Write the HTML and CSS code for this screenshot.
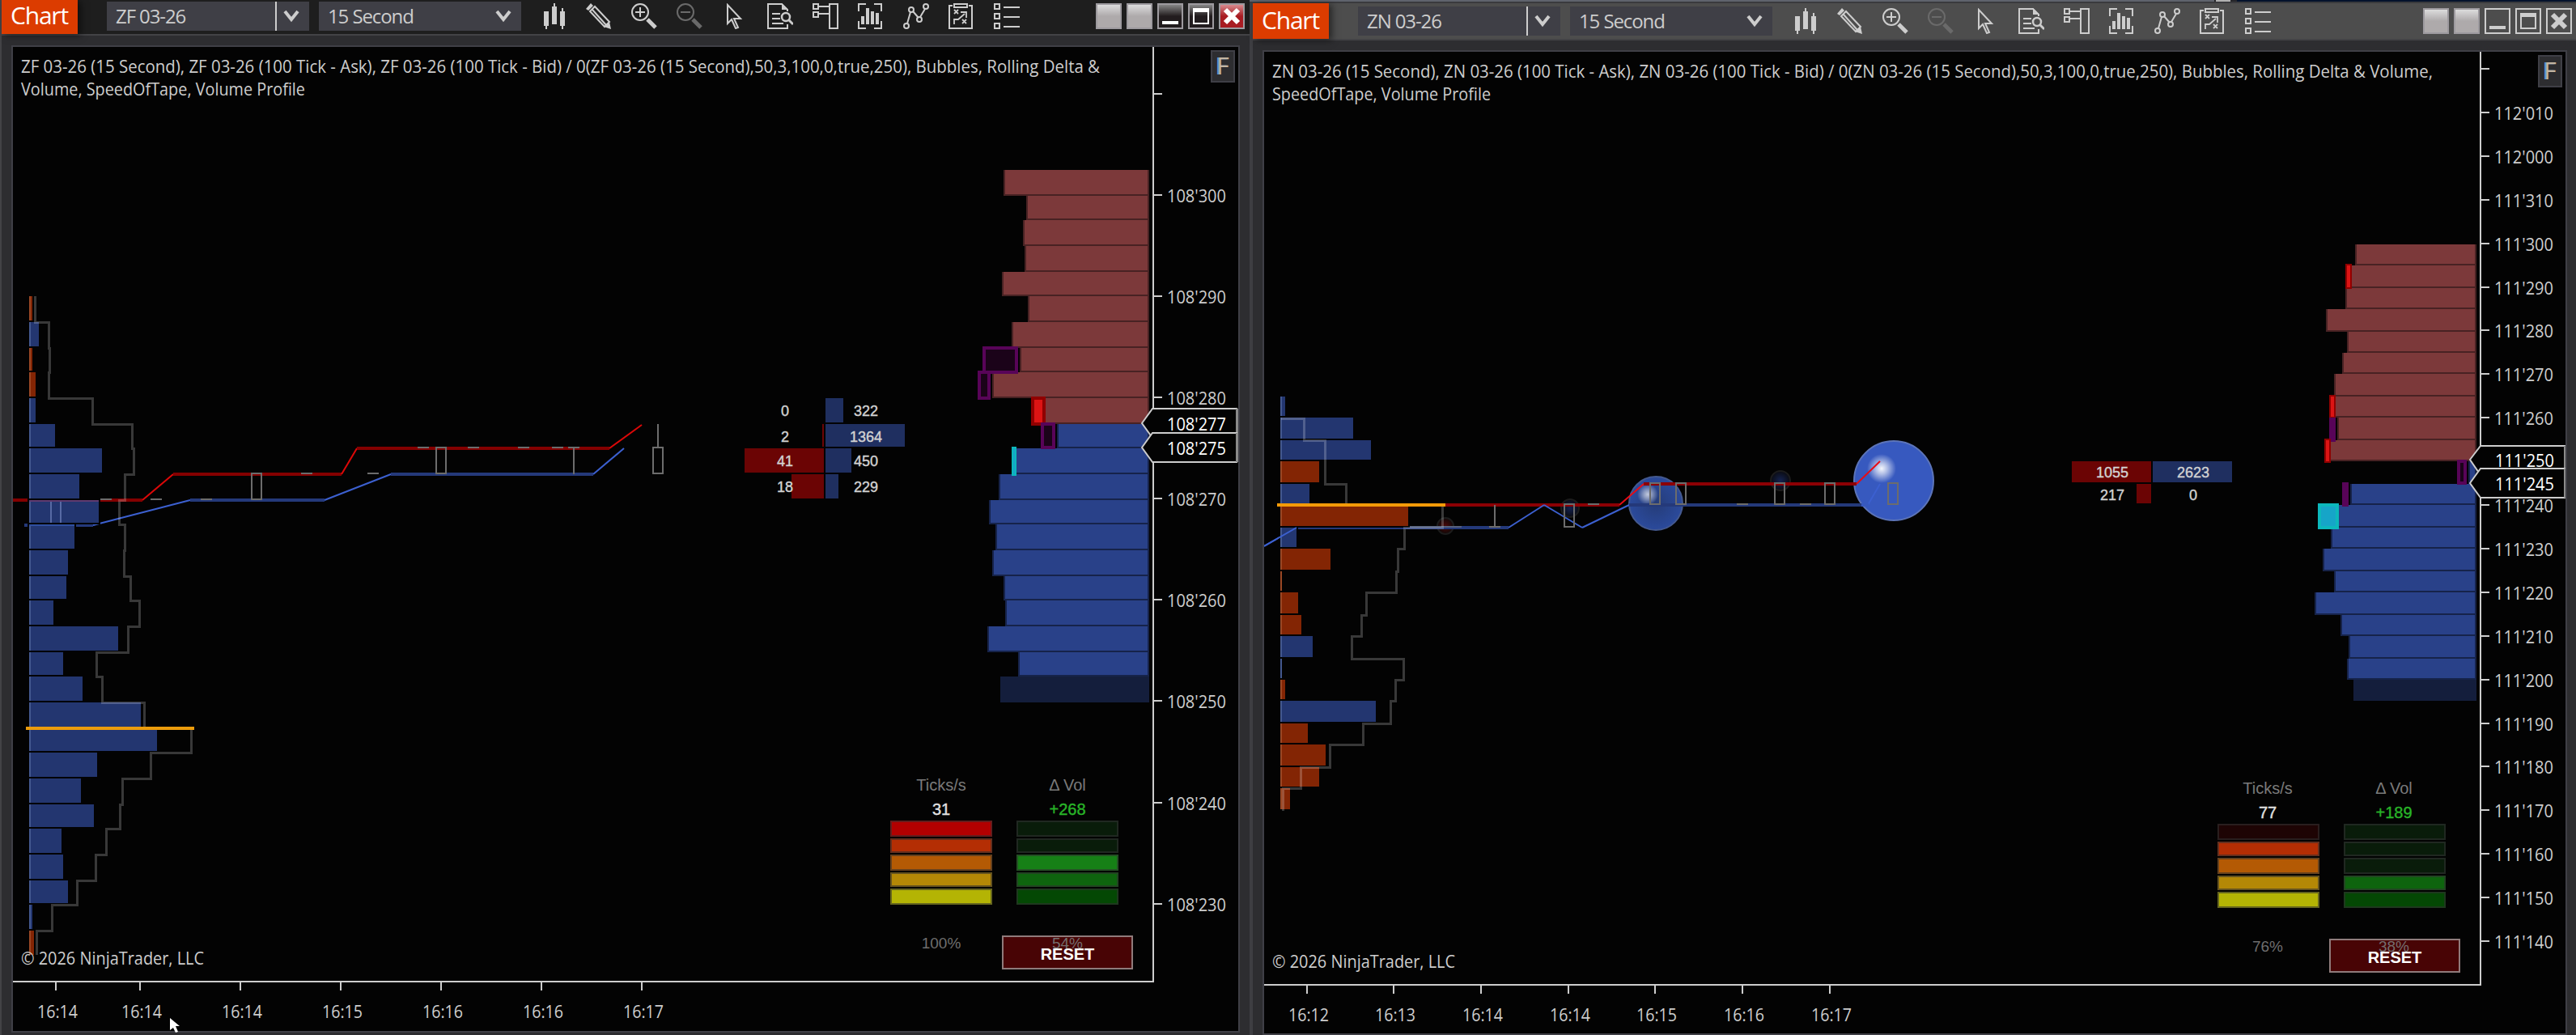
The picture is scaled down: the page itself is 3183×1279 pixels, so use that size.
FILE: index.html
```html
<!DOCTYPE html>
<html lang="en">
<head>
  <meta charset="UTF-8">
  <meta name="viewport" content="width=device-width, initial-scale=1.0">
  <title>Chart</title>
  <link rel="stylesheet" href="styles.css">
</head>
<body>
  <!-- icon sprite -->
  <svg class="sprite">
    <symbol id="i-candles" viewBox="0 0 32 32">
      <path d="M4 10h6v18h-6zM14 4h6v22h-6zM24 10h6v18h-6z" fill="currentColor"/>
      <path d="M7 28v4M17 0v4M27 6v4M27 28v4" stroke="currentColor" stroke-width="2"/>
    </symbol>
    <symbol id="i-pencil" viewBox="0 0 32 32">
      <path d="M0 7L6 0L9 3L3 9Z M31 32L22 29L29 23Z" fill="currentColor"/>
      <path d="M5 10L23 29L29 23L11 4Z M8 8L25 27" fill="none" stroke="currentColor" stroke-width="2"/>
    </symbol>
    <symbol id="i-zoomin" viewBox="0 0 32 32">
      <circle cx="11" cy="11" r="10" fill="none" stroke="currentColor" stroke-width="2"/>
      <path d="M11 5v12M5 11h12" stroke="currentColor" stroke-width="2"/>
      <path d="M20 20L30 30" stroke="currentColor" stroke-width="5"/>
    </symbol>
    <symbol id="i-zoomout" viewBox="0 0 32 32">
      <circle cx="11" cy="11" r="10" fill="none" stroke="currentColor" stroke-width="2"/>
      <path d="M5 11h12" stroke="currentColor" stroke-width="2"/>
      <path d="M20 20L30 30" stroke="currentColor" stroke-width="5"/>
    </symbol>
    <symbol id="i-cursor" viewBox="0 0 32 32">
      <path d="M7 2V25L12 20L17 31L20 30L15 19H23Z" fill="none" stroke="currentColor" stroke-width="2"/>
    </symbol>
    <symbol id="i-doc" viewBox="0 0 32 32">
      <path d="M25 10V8L18 1H1V31H25V26M6 13h10M6 19h10M6 25h14" fill="none" stroke="currentColor" stroke-width="2"/>
      <path d="M18 0L26 8H18Z" fill="currentColor"/>
      <circle cx="23" cy="17" r="5" fill="none" stroke="currentColor" stroke-width="2.5"/>
      <path d="M26 20L32 26" stroke="currentColor" stroke-width="3"/>
    </symbol>
    <symbol id="i-panel" viewBox="0 0 32 32">
      <path d="M1 1h6v6h-6zM1 11h6v6h-6zM21 1h10v30h-10zM7 4h14M7 13h14" fill="none" stroke="currentColor" stroke-width="2"/>
    </symbol>
    <symbol id="i-data" viewBox="0 0 32 32">
      <path d="M10 1H1V10M20 1H29V10M1 22V31H10M29 22V31H20" fill="none" stroke="currentColor" stroke-width="2"/>
      <path d="M4 16h4v10h-4zM10 6h4v20h-4zM16 10h4v16h-4zM22 12h4v14h-4z" fill="currentColor"/>
    </symbol>
    <symbol id="i-line" viewBox="0 0 32 32">
      <path d="M5 25L9 11M12 10L19 18M21 17L27 7" stroke="currentColor" stroke-width="2"/>
      <g fill="none" stroke="currentColor" stroke-width="2">
        <circle cx="4" cy="28" r="3"/><circle cx="10" cy="8" r="3"/><circle cx="20" cy="20" r="3"/><circle cx="28" cy="4" r="3"/>
      </g>
    </symbol>
    <symbol id="i-strategy" viewBox="0 0 32 32">
      <path d="M5 3H1V31H29V3H25M7 1H23V5H7Z" fill="none" stroke="currentColor" stroke-width="2"/>
      <path d="M7 26V20H12L20 13M15 11H22V18M7 8l5 5M12 8l-5 5M17 20l5 5M22 20l-5 5" fill="none" stroke="currentColor" stroke-width="1.8"/>
    </symbol>
    <symbol id="i-list" viewBox="0 0 32 32">
      <path d="M1 1h6v6h-6zM1 13h6v6h-6zM1 25h6v6h-6zM12 5h20M12 17h20M12 29h20" fill="none" stroke="currentColor" stroke-width="2"/>
    </symbol>
    <symbol id="i-chevron" viewBox="0 0 20 16">
      <path d="M2 2L10 12L18 2" fill="none" stroke="currentColor" stroke-width="4"/>
    </symbol>
    <symbol id="i-close" viewBox="0 0 28 28">
      <path d="M6 6L22 22M22 6L6 22" stroke="currentColor" stroke-width="6"/>
    </symbol>
    <symbol id="i-max" viewBox="0 0 28 28">
      <path d="M5 5h18v18h-18z" fill="none" stroke="currentColor" stroke-width="2"/>
      <path d="M4 4h20v5h-20z" fill="currentColor"/>
    </symbol>
    <symbol id="i-min" viewBox="0 0 28 28">
      <path d="M4 20h20v4h-20z" fill="currentColor"/>
    </symbol>
  </svg>

  <div class="window first">
    <div class="toolbar">
      <div class="tab">Chart</div>
      <div class="select instrument"><span>ZF 03-26</span><i></i><svg class="chevron"><use href="#i-chevron"/></svg></div>
      <div class="select interval"><span>15 Second</span><svg class="chevron"><use href="#i-chevron"/></svg></div>
      <div class="icons"></div>
      <div class="controls">
        <b></b><b></b>
        <b class="dark"><svg><use href="#i-min"/></svg></b>
        <b class="dark"><svg><use href="#i-max"/></svg></b>
        <b class="red"><svg><use href="#i-close"/></svg></b>
      </div>
    </div>
    <div class="content">
      <div class="panel">
        <svg class="chart" id="zf" width="1514" height="1216" viewBox="16 58 1514 1216"></svg>
        <div class="fix">F</div>
        <div class="tape">
          <div class="gauge">
            <p>Ticks/s</p><p class="value">31</p>
            <ul class="heat"><li></li><li></li><li></li><li></li><li></li></ul>
            <p class="percent">100%</p>
          </div>
          <div class="gauge">
            <p>Δ Vol</p><p class="value up">+268</p>
            <ul class="green"><li class="off"></li><li class="off"></li><li></li><li></li><li></li></ul>
            <p class="percent">54%</p>
          </div>
          <div class="reset">RESET</div>
        </div>
      </div>
    </div>
    <svg class="pointer" width="14" height="20" viewBox="0 0 14 20"><path d="M1 1V16L5 13L8 19L11 18L8 11H13Z" fill="#fff"/></svg>
  </div>

  <div class="window second">
    <div class="toolbar">
      <div class="tab">Chart</div>
      <div class="select instrument"><span>ZN 03-26</span><i></i><svg class="chevron"><use href="#i-chevron"/></svg></div>
      <div class="select interval"><span>15 Second</span><svg class="chevron"><use href="#i-chevron"/></svg></div>
      <div class="icons"></div>
      <div class="controls">
        <b></b><b></b>
        <b class="flat"><svg><use href="#i-min"/></svg></b>
        <b class="flat"><svg><use href="#i-max"/></svg></b>
        <b class="flat"><svg><use href="#i-close"/></svg></b>
      </div>
    </div>
    <div class="content">
      <div class="panel">
        <svg class="chart" id="zn" width="1608" height="1214" viewBox="1562 64 1608 1214"></svg>
        <div class="fix">F</div>
        <div class="tape">
          <div class="gauge">
            <p>Ticks/s</p><p class="value">77</p>
            <ul class="heat"><li class="off"></li><li></li><li></li><li></li><li></li></ul>
            <p class="percent">76%</p>
          </div>
          <div class="gauge">
            <p>Δ Vol</p><p class="value up">+189</p>
            <ul class="green"><li class="off"></li><li class="off"></li><li class="off"></li><li></li><li></li></ul>
            <p class="percent">38%</p>
          </div>
          <div class="reset">RESET</div>
        </div>
      </div>
    </div>
  </div>
  <script src="chart.js"></script>
</body>
</html>
```
FILE: styles.css
```css
* {
  margin: 0;
  padding: 0;
  box-sizing: border-box;
  list-style-type: none;
}
body {
  display: flex;
  width: 3183px;
  height: 1279px;
  overflow: hidden;
  background: #2d2d30;
  font-family: "Open Sans", "Noto Sans", sans-serif;
  color: #cdcdcd;
}
.sprite {
  position: absolute;
  width: 0;
  height: 0;
}
.window {
  position: relative;
  display: flex;
  flex-direction: column;
  height: 1279px;
}
.first {
  width: 1544px;
  border-left: 2px solid #434346;
}
.second {
  width: 1639px;
  border-left: 4px solid #3e3e42;
}
.second::before {
  content: "";
  flex: none;
  height: 2px;
  margin-left: -4px;
  border-bottom: 2px solid #3a3a3d;
  background: linear-gradient(90deg, #5f636d 1192px, #26262a 1192px, #26262a 1194px, #b0b0b0 1194px, #b0b0b0 1212px, #26262a 1212px, #26262a 1220px, #04122c 1220px);
}

/* toolbar */
.toolbar {
  display: flex;
  flex: none;
  align-items: center;
  height: 44px;
  padding-bottom: 2px;
  border-bottom: 2px solid #434346;
  background: #1e1e1e;
}
.second .toolbar {
  height: 46px;
  padding-bottom: 0;
  background: #4d4d4d;
}
.tab {
  align-self: flex-start;
  width: 94px;
  height: 42px;
  padding-left: 11px;
  background: #dc3c00;
  box-shadow: 4px 2px 8px rgba(0, 0, 0, .5);
  color: #fff;
  font-size: 30px;
  line-height: 37px;
  letter-spacing: -1.2px;
}
.second .tab {
  height: 44px;
  line-height: 41px;
}
.select {
  display: flex;
  align-items: center;
  width: 250px;
  height: 36px;
  padding: 0 12px 0 11px;
  background: #3f3f46;
  font-size: 24px;
  line-height: 36px;
  letter-spacing: -1.1px;
}
.select span {
  flex: 1;
  white-space: nowrap;
}
.instrument {
  margin-left: 36px;
}
.interval {
  margin-left: 12px;
}
.select i {
  width: 2px;
  height: 36px;
  margin-right: 8px;
  background: #cdcdcd;
}
.chevron {
  width: 20px;
  height: 16px;
}
.icons {
  display: flex;
  gap: 24px;
  margin-left: 24px;
}
.icons svg {
  width: 32px;
  height: 32px;
}
.icons .disabled {
  color: #6a6a6a;
}
.controls {
  display: flex;
  gap: 6px;
  margin-left: auto;
  margin-right: 6px;
}
.second .controls {
  margin-right: 5px;
}
.controls b {
  width: 32px;
  height: 32px;
  border: 2px solid #9d9a9f;
  background: linear-gradient(#dcdcdc, #aeaaab 50%);
}
.controls svg {
  display: block;
  width: 28px;
  height: 28px;
  color: #fff;
}
.controls .dark {
  background: linear-gradient(#858585, #221c1e 50%);
}
.controls .red {
  background: linear-gradient(#d88a8e, #a81c22 50%);
}
.controls .flat {
  border-color: #cdcdcd;
  background: none;
}
.controls .flat svg {
  color: #cdcdcd;
}

/* chart panel */
.content {
  flex: 1;
  min-height: 0;
  padding: 12px 12px 3px;
}
.second .content {
  padding: 12px 11px 0 12px;
}
.panel {
  position: relative;
  height: 100%;
  overflow: hidden;
  border: 2px solid #3f3f46;
  background: #030303;
}
.chart {
  display: block;
}
.chart text {
  fill: #cdcdcd;
  font-size: 22px;
}
.chart .print {
  fill: #d2d2d2;
  font: 18px "Liberation Sans", sans-serif;
  stroke: #d2d2d2;
  stroke-width: .4px;
}
.chart .last {
  fill: #fff;
}
.fix {
  position: absolute;
  top: 4px;
  right: 4px;
  width: 30px;
  height: 40px;
  border: 2px solid #3f3f46;
  background: #2d2d30;
  color: #c4b5a2;
  text-shadow: -2px 0 #5f97d4;
  font-size: 30px;
  line-height: 34px;
  text-align: center;
}
.tape {
  position: absolute;
  top: 897px;
  right: 148px;
  display: flex;
  gap: 30px;
  font: 20px/30px "Liberation Sans", sans-serif;
  text-align: center;
}
.second .tape {
  top: 895px;
}
.gauge {
  width: 126px;
  color: #7a7a7a;
}
.second .gauge p {
  margin-left: -2px;
}
.gauge .value {
  color: #e0e0e0;
  -webkit-text-stroke: .4px currentColor;
}
.gauge .up {
  color: #28b428;
}
.gauge .percent {
  position: relative;
  z-index: 2;
  margin-top: 33px;
  font-size: 19px;
  opacity: .9;
}
.gauge ul {
  display: grid;
  grid-template-rows: 20px 18px 20px 18px 20px;
  gap: 2px;
  margin-top: -1px;
}
.gauge li {
  border: 2px solid rgba(48, 48, 48, .6);
}
.heat li:nth-child(1) { background: #b20000; }
.heat li:nth-child(2) { background: #b42e04; }
.heat li:nth-child(3) { background: #b45a04; }
.heat li:nth-child(4) { background: #b48806; }
.heat li:nth-child(5) { background: #b4b404; }
.heat .off:nth-child(1) { background: #1e0404; }
.green li:nth-child(3) { background: #168016; }
.green li:nth-child(4) { background: #0e640e; }
.green li:nth-child(5) { background: #044804; }
.green .off:nth-child(n) { background: #091c0a; }
.reset {
  position: absolute;
  top: 201px;
  right: -18px;
  width: 162px;
  height: 42px;
  border: 2px solid #8f7b7b;
  background: #480405;
  color: #fff;
  font-weight: bold;
  line-height: 43px;
}
.pointer {
  position: absolute;
  left: 207px;
  top: 1257px;
}
```
FILE: chart.js
```js
var icons = ['candles', 'pencil', 'zoomin', 'zoomout', 'cursor', 'doc', 'panel', 'data', 'line', 'strategy', 'list'];
document.querySelectorAll('.icons').forEach(function (el) {
  el.innerHTML = icons.map(function (n) {
    return '<svg class="' + (n === 'zoomout' ? 'disabled' : '') + '"><use href="#i-' + n + '"/></svg>';
  }).join('');
});

var BLUE = '#233670', ORANGE = '#832504', GRAY = '#6c6c6c';

function rect(x1, y1, x2, y2, fill, extra) {
  return '<rect x="' + x1 + '" y="' + y1 + '" width="' + (x2 - x1) + '" height="' + (y2 - y1) + '" fill="' + fill + '" ' + (extra || '') + '/>';
}
function text(x, y, str, cls, width, anchor) {
  return '<text x="' + x + '" y="' + y + '" class="' + cls + '"' +
    (width ? ' textLength="' + width + '" lengthAdjust="spacingAndGlyphs"' : '') +
    (anchor ? ' text-anchor="' + anchor + '"' : '') + '>' + str + '</text>';
}
// flat parts are thick and dim, sloped parts thin and bright
function quote(pts, dim, bright) {
  var s = '';
  for (var i = 1; i < pts.length; i++) {
    var a = pts[i - 1], b = pts[i], flat = a[1] === b[1];
    s += '<line x1="' + a[0] + '" y1="' + a[1] + '" x2="' + b[0] + '" y2="' + b[1] + '" stroke="' + (flat ? dim : bright) + '" stroke-width="' + (flat ? 4 : 2) + '"/>';
  }
  return s;
}
function candle(x, y1, y2) {
  return '<rect x="' + (x + 1) + '" y="' + (y1 + 1) + '" width="12" height="' + (y2 - y1 - 2) + '" fill="none" stroke="' + GRAY + '" stroke-width="2"/>';
}
function dash(x, y) {
  return rect(x, y, x + 14, y + 2, GRAY);
}
// left hand volume profile: [top, right, o = orange]
function profile(x, rows, end) {
  return rows.map(function (r, i) {
    var bottom = (i + 1 < rows.length ? rows[i + 1][0] : end) - 2;
    return rect(x - 2, r[0] - 2, r[1] + 2, bottom + 2, '#030303') +
      rect(x, r[0], r[1], bottom, r[2] ? ORANGE : BLUE) +
      rect(x, r[0], x + 2, bottom, r[2] ? '#9a4724' : '#43588f');
  }).join('');
}
// outline steps: [x, y] means run down at x until y
function outline(x, y, steps) {
  var d = 'M' + x + ' ' + y;
  steps.forEach(function (s) { d += 'H' + s[0] + 'V' + s[1]; });
  return '<path d="' + d + '" fill="none" stroke="#fff" stroke-opacity=".21" stroke-width="3" shape-rendering="crispEdges"/>';
}
function depth(right, rows, end, split) {
  return rows.map(function (r, i) {
    var last = i === rows.length - 1;
    var bottom = last ? end : rows[i + 1][0];
    var c = last ? ['#141e3c', '#141e3c'] : i < split ? ['#7c393a', '#482223'] : ['#294189', '#16234a'];
    return rect(r[1], r[0], right, bottom, c[1]) + rect(r[1] + 2, r[0], right - 2, bottom - 2, c[0]);
  }).join('');
}
var marks = {
  p: ['#1b0319', '#580458'],
  r: ['#dc1414', '#900000'],
  c: ['#16a5c8', '#0cb8bc']
};
function mark(t, x1, y1, x2, y2) {
  var w = x2 - x1 < 10 ? 2 : 4;
  if (t === 'p' && w === 2) w = 4;
  return rect(x1 + w / 2, y1 + w / 2, x2 - w / 2, y2 - w / 2, marks[t][0], 'stroke="' + marks[t][1] + '" stroke-width="' + w + '"');
}
function priceTag(x, y, top, bottom, label) {
  return '<path d="M' + x + ' ' + y + 'L' + (x + 13) + ' ' + top + 'H' + (x + 117) + 'V' + bottom + 'H' + (x + 13) + 'Z" fill="#030303" stroke="#cdcdcd" stroke-width="2"/>' +
    rect(x + 116, top, x + 119, bottom, '#8a8a8a') +
    text(x + 31, y + 9, label, 'last', 73);
}
function axes(c) {
  var s = rect(c.ax, c.top, c.ax + 2, c.ay + 2, '#cdcdcd') + rect(c.left, c.ay, c.ax + 2, c.ay + 2, '#cdcdcd');
  c.prices.forEach(function (p, i) {
    var y = Math.round(c.p0 + i * c.pstep);
    s += rect(c.ax + 2, y - 1, c.ax + 12, y + 1, '#cdcdcd');
    if (p) s += text(c.ax + 18, y + 9, p, '', 73);
  });
  c.times.forEach(function (t) {
    s += rect(t[0] - 1, c.ay + 2, t[0] + 1, c.ay + 12, '#cdcdcd') + text(t[0] + 2, c.ay + 46, t[1], '', 50, 'middle');
  });
  return s;
}

/* ---- ZF ---- */
var s = axes({
  ax: 1424, ay: 1212, top: 58, left: 16, p0: 115.6, pstep: 125.14,
  prices: ['', "108'300", "108'290", "108'280", "108'270", "108'260", "108'250", "108'240", "108'230"],
  times: [[69, '16:14'], [173, '16:14'], [297, '16:14'], [421, '16:15'], [545, '16:16'], [669, '16:16'], [793, '16:17']]
});
s += text(26, 90, 'ZF 03-26 (15 Second), ZF 03-26 (100 Tick - Ask), ZF 03-26 (100 Tick - Bid) / 0(ZF 03-26 (15 Second),50,3,100,0,true,250), Bubbles, Rolling Delta &amp;', '', 1333);
s += text(26, 118, 'Volume, SpeedOfTape, Volume Profile', '', 351);
s += quote([[16, 618], [176, 618], [214, 586], [422, 586], [441, 554], [753, 554], [793, 525]], '#840000', '#dc0808');
s += quote([[30, 649], [115, 649]], '#24397a', '');
s += quote([[115, 649], [235, 618], [401, 618], [483, 586], [733, 586], [771, 554]], '#24397a', '#3c60d0');
[[124, 616], [186, 616], [248, 616], [372, 584], [454, 584], [516, 552], [578, 552], [640, 552], [682, 552], [702, 552]].forEach(function (d) { s += dash(d[0], d[1]); });
s += candle(310, 584, 618) + candle(538, 552, 586) + candle(806, 552, 586);
s += rect(708, 554, 710, 586, GRAY) + rect(812, 524, 814, 552, GRAY);
s += profile(36, [
  [366, 40, 1], [398, 48], [430, 40, 1], [460, 44, 1], [492, 44], [524, 68], [554, 126], [586, 98], [618, 122],
  [648, 92], [680, 84], [712, 82], [742, 66], [774, 146], [806, 78], [836, 102], [868, 174], [900, 194],
  [930, 120], [962, 100], [994, 116], [1024, 76], [1056, 78], [1088, 84], [1118, 40], [1150, 42, 1]
], 1182);
s += rect(36, 618, 122, 620, '#5f3a70') + rect(36, 648, 92, 650, '#2f4fa0') + rect(62, 620, 64, 646, '#576aa4') + rect(74, 620, 76, 646, '#576aa4');
s += outline(43, 366, [
  [43, 398], [60, 430], [61, 460], [60, 492], [114, 524], [163, 554], [165, 586], [154, 618], [147, 648], [154, 680],
  [153, 712], [161, 742], [172, 774], [158, 806], [119, 836], [126, 868], [178, 900], [236, 930], [186, 962], [151, 994],
  [148, 1024], [131, 1056], [118, 1088], [95, 1118], [64, 1150], [45, 1180]
]);
s += rect(32, 898, 240, 902, '#ec9c0c');
s += text(26, 1192, '© 2026 NinjaTrader, LLC', '', 226);
// rolling delta
s += rect(1020, 492, 1042, 522, '#1f2f60') + rect(1020, 524, 1118, 552, '#1f2f60') + rect(1020, 554, 1052, 584, '#1f2f60') + rect(1020, 586, 1036, 616, '#1f2f60');
s += rect(1016, 524, 1018, 552, '#6b0404') + rect(920, 554, 1018, 584, '#6b0404') + rect(978, 586, 1018, 616, '#6b0404');
[['0', '322', 514], ['2', '1364', 546], ['41', '450', 576], ['18', '229', 608]].forEach(function (r) {
  s += text(970, r[2], r[0], 'print', 0, 'middle') + text(1070, r[2], r[1], 'print', 0, 'middle');
});
s += depth(1420, [
  [210, 1240], [242, 1268], [272, 1264], [304, 1266], [336, 1238], [366, 1270], [398, 1250], [430, 1260], [460, 1226], [492, 1274],
  [524, 1306], [554, 1250], [586, 1234], [618, 1222], [648, 1230], [680, 1226], [712, 1240], [742, 1242], [774, 1220], [806, 1258], [836, 1236]
], 868, 10);
s += mark('p', 1214, 428, 1258, 462) + mark('p', 1208, 458, 1224, 494) + mark('r', 1274, 490, 1292, 526) + mark('p', 1286, 522, 1304, 555) + mark('c', 1250, 552, 1256, 588);
s += priceTag(1411, 523, 505, 541, "108'277") + priceTag(1411, 553, 535, 571, "108'275");
document.getElementById('zf').innerHTML = s;

/* ---- ZN ---- */
s = '<defs>' +
  '<radialGradient id="glow"><stop offset="0" stop-color="#fff" stop-opacity=".95"/><stop offset=".4" stop-color="#fff" stop-opacity=".6"/><stop offset="1" stop-color="#fff" stop-opacity="0"/></radialGradient>' +
  '<radialGradient id="ball"><stop offset="0" stop-color="#253c78"/><stop offset="1" stop-color="#2b4a9c"/></radialGradient>' +
  '<radialGradient id="dim"><stop offset="0" stop-color="#142250"/><stop offset="1" stop-color="#0a0b12"/></radialGradient>' +
  '<radialGradient id="dimred"><stop offset="0" stop-color="#4a0808"/><stop offset="1" stop-color="#100808"/></radialGradient>' +
  '</defs>';
s += axes({
  ax: 3064, ay: 1216, top: 64, left: 1562, p0: 85, pstep: 53.9,
  prices: ['', "112'010", "112'000", "111'310", "111'300", "111'290", "111'280", "111'270", "111'260", "111'250", "111'240",
    "111'230", "111'220", "111'210", "111'200", "111'190", "111'180", "111'170", "111'160", "111'150", "111'140"],
  times: [[1615, '16:12'], [1722, '16:13'], [1830, '16:14'], [1938, '16:14'], [2045, '16:15'], [2153, '16:16'], [2261, '16:17']]
});
s += text(1572, 96, 'ZN 03-26 (15 Second), ZN 03-26 (100 Tick - Ask), ZN 03-26 (100 Tick - Bid) / 0(ZN 03-26 (15 Second),50,3,100,0,true,250), Bubbles, Rolling Delta &amp; Volume,', '', 1434);
s += text(1572, 124, 'SpeedOfTape, Volume Profile', '', 270);
// bubbles
s += '<circle cx="2046" cy="622" r="33" fill="url(#ball)" stroke="#44598f" stroke-width="2"/>' +
  '<circle cx="2340" cy="594" r="49" fill="#3759bf" stroke="#5c74b8" stroke-width="2"/>' +
  '<circle cx="2200" cy="594" r="12" fill="url(#dim)" stroke="#1c1c1c" stroke-width="2"/>' +
  '<circle cx="1940" cy="628" r="11" fill="url(#dim)" stroke="#1c1c1c" stroke-width="2"/>' +
  '<circle cx="1786" cy="650" r="10" fill="url(#dimred)" stroke="#1c1c1c" stroke-width="2"/>' +
  '<circle cx="2036" cy="611" r="13" fill="url(#glow)" opacity=".75"/><circle cx="2325" cy="579" r="18" fill="url(#glow)"/>';
s += quote([[1786, 624], [2001, 624], [2031, 598], [2294, 598], [2323, 570]], '#8c0004', '#e80c14');
s += quote([[1562, 675], [1602, 652], [1864, 652], [1908, 624], [1955, 652], [2013, 624], [2308, 624], [2323, 598]], '#24397a', '#3c60d0');
s += rect(2300, 622, 2309, 626, '#3759bf') + rect(1742, 650, 1806, 652, '#56617c');
[[1840, 650], [1962, 622], [2146, 622], [2224, 622]].forEach(function (d) { s += dash(d[0], d[1]); });
s += rect(1846, 624, 1848, 650, GRAY) + candle(1932, 622, 652);
[2038, 2070, 2192, 2254, 2332].forEach(function (x) { s += candle(x, 596, 624); });
s += profile(1582, [
  [490, 1588], [516, 1672], [544, 1694], [570, 1630, 1], [598, 1618], [624, 1740, 1], [652, 1602], [678, 1644, 1], [706, 1584, 1],
  [732, 1604, 1], [760, 1608, 1], [786, 1622], [814, 1584], [840, 1588, 1], [866, 1700], [894, 1616, 1], [920, 1638, 1], [948, 1630, 1], [974, 1594, 1]
], 1002);
s += '<path d="M1562 675L1602 652" stroke="#3c60d0" stroke-width="2"/>';
s += outline(1583, 517, [
  [1611, 544], [1637, 598], [1663, 624], [1782, 652], [1735, 678], [1727, 706], [1725, 732], [1688, 760], [1682, 786], [1670, 814],
  [1734, 840], [1724, 866], [1718, 894], [1684, 920], [1643, 948], [1607, 974], [1585, 1002]
]);
s += rect(1578, 622, 1786, 626, '#f49a08');
s += text(1572, 1196, '© 2026 NinjaTrader, LLC', '', 226);
s += rect(2560, 570, 2658, 596, '#6b0404') + rect(2640, 598, 2658, 622, '#6b0404') + rect(2660, 570, 2758, 596, '#1f2f60');
[['1055', '2623', 590], ['217', '0', 618]].forEach(function (r) {
  s += text(2610, r[2], r[0], 'print', 0, 'middle') + text(2710, r[2], r[1], 'print', 0, 'middle');
});
s += depth(3060, [
  [302, 2910], [328, 2898], [356, 2898], [382, 2874], [410, 2900], [436, 2894], [462, 2884], [490, 2878], [516, 2888], [544, 2872],
  [570, 3050], [598, 2904], [624, 2864], [652, 2880], [678, 2870], [706, 2884], [732, 2860], [760, 2892], [786, 2902], [814, 2900], [840, 2908]
], 866, 10);
s += mark('r', 2898, 326, 2906, 357) + mark('r', 2878, 488, 2886, 517) + mark('p', 2878, 516, 2886, 546) + mark('r', 2872, 542, 2880, 572) +
  mark('p', 3036, 568, 3048, 599) + mark('p', 2894, 596, 2902, 626) + mark('c', 2864, 622, 2890, 654);
s += priceTag(3052, 568, 551, 587, "111'250") + priceTag(3052, 597, 579, 615, "111'245");
document.getElementById('zn').innerHTML = s;
```
